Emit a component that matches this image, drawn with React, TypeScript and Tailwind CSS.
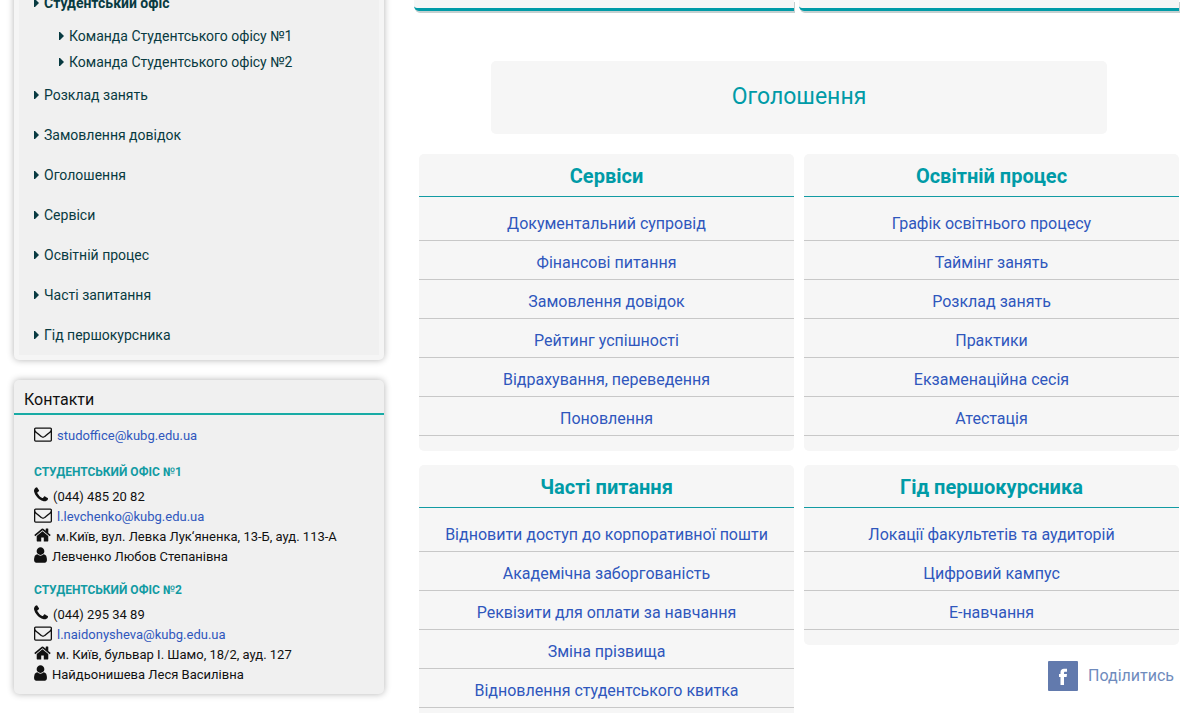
import type { ReactNode } from "react";

type IconProps = { className?: string };

function EnvelopeIcon({ className }: IconProps) {
  return (
    <svg viewBox="0 0 1792 1792" className={className} fill="currentColor" aria-hidden="true">
      <path d="M1664 1504v-768q-32 36-69 66-268 206-426 338-51 43-83 67t-86.5 48.5-102.5 24.500h-2q-48 0-102.500-24.500t-86.500-48.500-83-67q-158-132-426-338-37-30-69-66v768q0 13 9.500 22.500t22.500 9.500h1472q13 0 22.500-9.500t9.500-22.500zm0-1051v-24.500l-.5-13-3-12.500-5.500-9-9-7.500-14-2.500h-1472q-13 0-22.500 9.500t-9.500 22.500q0 168 147 284 193 152 401 317 6 5 35 29.500t46 37.500 44.500 31.500 50.500 27.500 43 9h2q20 0 43-9t50.500-27.500 44.500-31.500 46-37.500 35-29.500q208-165 401-317 54-43 100.500-115.500t46.500-131.500zm128-37v1088q0 66-47 113t-113 47h-1472q-66 0-113-47t-47-113v-1088q0-66 47-113t113-47h1472q66 0 113 47t47 113z" />
    </svg>
  );
}

function PhoneIcon({ className }: IconProps) {
  return (
    <svg viewBox="192 0 1408 1792" className={className} fill="currentColor" aria-hidden="true">
      <path d="M1600 1240q0 27-10 70.5t-21 68.5q-21 50-122 106-94 51-186 51-27 0-53-3.5t-57.5-12.5-47-14.5-55.5-20.5-49-18q-98-35-175-83-127-79-264-216t-216-264q-48-77-83-175-3-9-18-49t-20.5-55.5-14.5-47-12.5-57.5-3.5-53q0-92 51-186 56-101 106-122 25-11 68.5-21t70.5-10q14 0 21 3 18 6 53 76 11 19 30 54t35 63.5 31 53.5q3 4 17.5 25t21.5 35.5 7 28.5q0 20-28.5 50t-62 55-62 53-28.5 46q0 9 5 22.5t8.5 20.5 14 24 11.5 19q76 137 174 235t235 174q2 1 19 11.5t24 14 20.5 8.5 22.5 5q18 0 46-28.5t53-62 55-62 50-28.5q14 0 28.5 7t35.5 21.5 25 17.5q25 15 53.5 31t63.5 35 54 30q70 35 76 53 3 7 3 21z" />
    </svg>
  );
}

function HomeIcon({ className }: IconProps) {
  return (
    <svg viewBox="64 0 1664 1792" className={className} fill="currentColor" aria-hidden="true">
      <path d="M1472 992v480q0 26-19 45t-45 19h-384v-384h-256v384h-384q-26 0-45-19t-19-45v-480q0-1 .5-3t.5-3l575-474 575 474q1 2 1 6zm223-69l-62 74q-8 9-21 11h-3q-13 0-21-7l-692-577-692 577q-12 8-24 7-13-2-21-11l-62-74q-8-10-7-23.5t11-21.5l719-599q32-26 76-26t76 26l244 204v-195q0-14 9-23t23-9h192q14 0 23 9t9 23v408l219 182q10 8 11 21.5t-7 23.5z" />
    </svg>
  );
}

function UserIcon({ className }: IconProps) {
  return (
    <svg viewBox="256 0 1280 1792" className={className} fill="currentColor" aria-hidden="true">
      <path d="M1536 1399q0 109-62.5 187t-150.5 78h-854q-88 0-150.5-78t-62.5-187q0-85 8.5-160.5t31.5-152 58.5-131 94-89 134.5-34.5q131 128 313 128t313-128q76 0 134.5 34.5t94 89 58.5 131 31.5 152 8.5 160.5zm-256-887q0 159-112.5 271.5t-271.5 112.5-271.5-112.5-112.5-271.5 112.5-271.5 271.5-112.5 271.5 112.5 112.5 271.5z" />
    </svg>
  );
}

function Caret() {
  return (
    <svg viewBox="0 0 5 8" className="h-2 w-[5px] shrink-0" fill="currentColor" aria-hidden="true">
      <path d="M0 0h1l4 4-4 4H0z" />
    </svg>
  );
}

const subItems = ["Команда Студентського офісу №1", "Команда Студентського офісу №2"];

const menuItems = [
  "Розклад занять",
  "Замовлення довідок",
  "Оголошення",
  "Сервіси",
  "Освітній процес",
  "Часті запитання",
  "Гід першокурсника",
];

const offices = [
  {
    title: "СТУДЕНТСЬКИЙ ОФІС №1",
    phone: "(044) 485 20 82",
    email: "l.levchenko@kubg.edu.ua",
    address: "м.Київ, вул. Левка Лук‘яненка, 13-Б, ауд. 113-А",
    person: "Левченко Любов Степанівна",
  },
  {
    title: "СТУДЕНТСЬКИЙ ОФІС №2",
    phone: "(044) 295 34 89",
    email: "l.naidonysheva@kubg.edu.ua",
    address: "м. Київ, бульвар І. Шамо, 18/2, ауд. 127",
    person: "Найдьонишева Леся Василівна",
  },
];

const services = [
  "Документальний супровід",
  "Фінансові питання",
  "Замовлення довідок",
  "Рейтинг успішності",
  "Відрахування, переведення",
  "Поновлення",
];

const education = [
  "Графік освітнього процесу",
  "Таймінг занять",
  "Розклад занять",
  "Практики",
  "Екзаменаційна сесія",
  "Атестація",
];

const questions = [
  "Відновити доступ до корпоративної пошти",
  "Академічна заборгованість",
  "Реквізити для оплати за навчання",
  "Зміна прізвища",
  "Відновлення студентського квитка",
];

const guide = ["Локації факультетів та аудиторій", "Цифровий кампус", "Е-навчання"];

function SideMenu() {
  return (
    <nav className="-mt-[22px] rounded-[5px] bg-[#f5f5f5] p-[5px] shadow-[0_0_7px_rgba(0,0,0,0.3)]">
      <ul className="bg-[#f0f0f0] pl-[15px] text-sm text-[#083a41]">
        <li>
          <a href="#office" className="flex h-10 items-center gap-[5px] font-bold">
            <Caret />
            Студентський офіс
          </a>
          <ul className="pl-[25px]">
            {subItems.map((item) => (
              <li key={item}>
                <a href="#team" className="flex h-[26px] items-center gap-[5px]">
                  <Caret />
                  {item}
                </a>
              </li>
            ))}
          </ul>
        </li>
        {menuItems.map((item) => (
          <li key={item}>
            <a href="#menu" className="flex h-10 items-center gap-[5px]">
              <Caret />
              {item}
            </a>
          </li>
        ))}
      </ul>
    </nav>
  );
}

function ContactRow({ icon, children }: { icon: ReactNode; children: ReactNode }) {
  return (
    <p className="flex h-5 items-start gap-[5px] leading-[22px] whitespace-nowrap">
      {icon}
      {children}
    </p>
  );
}

function Contacts() {
  return (
    <section className="mt-5 rounded-[5px] bg-[#f0f0f0] pb-[10px] text-[13px] text-[#111] shadow-[0_0_7px_rgba(0,0,0,0.3)]">
      <h3 className="border-b-2 border-[#18aba5] px-[10px] pt-2 pb-px text-base">Контакти</h3>
      <div className="px-5 pt-[10px]">
        <ContactRow icon={<EnvelopeIcon className="h-[18px] w-[18px]" />}>
          <a href="mailto:studoffice@kubg.edu.ua" className="text-[#2f57bd]">
            studoffice@kubg.edu.ua
          </a>
        </ContactRow>
        <div className="flex flex-col gap-[13px] pt-4">
          {offices.map((office) => (
            <div key={office.title}>
              <h4 className="mb-[5px] h-5 text-xs leading-[22px] font-bold text-[#129ba3]">{office.title}</h4>
              <ContactRow icon={<PhoneIcon className="h-[18px] w-[14px]" />}>{office.phone}</ContactRow>
              <ContactRow icon={<EnvelopeIcon className="h-[18px] w-[18px]" />}>
                <a href={`mailto:${office.email}`} className="text-[#2f57bd]">
                  {office.email}
                </a>
              </ContactRow>
              <ContactRow icon={<HomeIcon className="h-[18px] w-[17px]" />}>{office.address}</ContactRow>
              <ContactRow icon={<UserIcon className="h-[18px] w-[13px]" />}>{office.person}</ContactRow>
            </div>
          ))}
        </div>
      </div>
    </section>
  );
}

function LinkCard({ title, links }: { title: string; links: string[] }) {
  return (
    <section className="rounded-[5px] bg-[#f6f6f6] pb-[15px] text-center">
      <h3 className="mb-[5px] h-[43px] border-b border-[#129ba3] text-xl leading-[44px] font-bold text-[#009ba7]">
        {title}
      </h3>
      <ul>
        {links.map((link) => (
          <li key={link} className="h-[39px] border-b border-[#c8c8c8] pt-[10px] text-base leading-6 whitespace-nowrap">
            <a href="#link" className="text-[#2f57bd]">
              {link}
            </a>
          </li>
        ))}
      </ul>
    </section>
  );
}

export default function App() {
  return (
    <div className="flex h-screen items-start gap-[30px] overflow-hidden bg-white px-[14px] font-[Roboto,sans-serif]">
      <aside className="w-[370px] shrink-0">
        <SideMenu />
        <Contacts />
      </aside>
      <main className="min-w-0 flex-1">
        <div className="grid grid-cols-2 gap-[5px]">
          <div className="h-[11px] rounded-bl-[5px] border-b-3 border-[#009ba7] bg-[#f6f6f6] shadow-[1px_2px_0_#c5d0d0]" />
          <div className="h-[11px] rounded-bl-[5px] border-b-3 border-[#009ba7] bg-[#f6f6f6] shadow-[1px_2px_0_#c5d0d0]" />
        </div>
        <div className="pl-[5px]">
          <a
            href="#announcements"
            className="mx-[72px] mt-[50px] mb-5 flex h-[73px] items-center justify-center rounded-[5px] bg-[#f6f6f6] text-[23px] text-[#009ba7]"
          >
            Оголошення
          </a>
          <div className="grid grid-cols-2 items-start gap-[10px]">
            <div className="flex flex-col gap-[14px]">
              <LinkCard title="Сервіси" links={services} />
              <LinkCard title="Часті питання" links={questions} />
            </div>
            <div className="flex flex-col gap-[14px]">
              <LinkCard title="Освітній процес" links={education} />
              <LinkCard title="Гід першокурсника" links={guide} />
              <a
                href="#share"
                className="flex items-center gap-[10px] self-end pt-[2px] pr-[5px] text-base text-[#6f8bbd]"
              >
                <svg viewBox="0 0 30 30" className="h-[30px] w-[30px]" aria-hidden="true">
                  <rect width="30" height="30" rx="1" fill="#627aad" />
                  <path
                    fill="#fff"
                    d="M12.500 24v-8H11v-3h1.500v-1.800C12.500 9 13.800 7.800 16 7.800h3v3h-1.800c-.9 0-1.200.4-1.200 1.200v1h3l-.4 3H16v8z"
                  />
                </svg>
                Поділитись
              </a>
            </div>
          </div>
        </div>
      </main>
    </div>
  );
}
